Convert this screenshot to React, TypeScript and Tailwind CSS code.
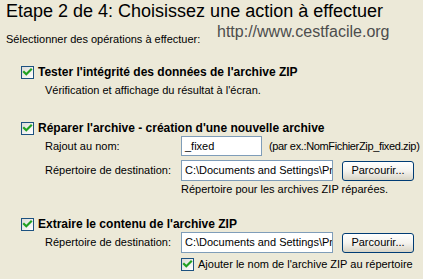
import React from "react";

function XpCheck() {
  return (
    <div className="w-[13px] h-[13px] shrink-0 border border-[#1c5180] bg-gradient-to-br from-[#dcdcd7] to-[#ffffff] flex items-center justify-center">
      <svg width="11" height="11" viewBox="0 0 11 11">
        <path d="M2 5 L4.3 7.3 L9 2.6" fill="none" stroke="#21a121" strokeWidth="2.2" strokeLinecap="square" />
      </svg>
    </div>
  );
}

function TextBox({ w, h, text }: { w: string; h: string; text: string }) {
  return (
    <div className={`${w} ${h} shrink-0 border border-[#7f9db9] bg-white pl-[3px] flex items-center overflow-hidden whitespace-nowrap text-[11px] leading-[13px]`}>
      {text}
    </div>
  );
}

function XpButton() {
  return (
    <div className="ml-[9px] w-[72px] h-[20px] shrink-0 rounded-[3px] border border-[#003c74] bg-gradient-to-b from-[#ffffff] via-[#f4f3ee] to-[#d8d4c6] flex items-center justify-center text-[11px] leading-[13px]">
      Parcourir...
    </div>
  );
}

export default function App() {
  return (
    <div
      className="w-[423px] h-[279px] bg-[#ece9d8] overflow-hidden text-black flex flex-col"
      style={{ fontFamily: '"Liberation Sans", Arial, sans-serif' }}
    >
      <div className="pl-[6px] pt-[2px] text-[18px] leading-[18px] whitespace-nowrap">
        Etape 2 de 4: Choisissez une action à effectuer
      </div>
      <div className="flex h-[26px]">
        <div className="pl-[6px] mt-[13px] w-[217px] text-[11px] leading-[13px] whitespace-nowrap">
          Sélectionner des opérations à effectuer:
        </div>
        <div className="mt-[4px] text-[16px] leading-[16px] text-[#4d4d4d] whitespace-nowrap">
          http://www.cestfacile.org
        </div>
      </div>

      {/* Section 1 */}
      <div className="mt-[19px] pl-[21px] flex items-start h-[14px]">
        <div className="mt-[1px]">
          <XpCheck />
        </div>
        <div className="ml-[4px] font-bold text-[12px] leading-[14px] whitespace-nowrap">
          Tester l'intégrité des données de l'archive ZIP
        </div>
      </div>
      <div className="mt-[5px] pl-[45px] text-[11px] leading-[13px] whitespace-nowrap">
        Vérification et affichage du résultat à l'écran.
      </div>

      {/* Section 2 */}
      <div className="mt-[24px] pl-[21px] flex items-start h-[14px]">
        <div className="mt-[1px]">
          <XpCheck />
        </div>
        <div className="ml-[4px] font-bold text-[12px] leading-[14px] whitespace-nowrap">
          Réparer l'archive - création d'une nouvelle archive
        </div>
      </div>
      <div className="mt-[1px] flex items-center h-[20px] text-[11px] leading-[13px]">
        <div className="pl-[45px] w-[181px] shrink-0 whitespace-nowrap">Rajout au nom:</div>
        <TextBox w="w-[81px]" h="h-[20px]" text="_fixed" />
        <div className="ml-[7px] whitespace-nowrap tracking-[-0.35px]">(par ex.:NomFichierZip_fixed.zip)</div>
      </div>
      <div className="mt-[4px] flex items-center h-[21px] text-[11px] leading-[13px]">
        <div className="pl-[45px] w-[181px] shrink-0 whitespace-nowrap">Répertoire de destination:</div>
        <TextBox w="w-[152px]" h="h-[21px]" text="C:\Documents and Settings\Pr" />
        <XpButton />
      </div>
      <div className="mt-[2px] pl-[181px] text-[11px] leading-[13px] whitespace-nowrap">
        Répertoire pour les archives ZIP réparées.
      </div>

      {/* Section 3 */}
      <div className="mt-[21px] pl-[21px] flex items-start h-[14px]">
        <div className="mt-[1px]">
          <XpCheck />
        </div>
        <div className="ml-[4px] font-bold text-[12px] leading-[14px] whitespace-nowrap">
          Extraire le contenu de l'archive ZIP
        </div>
      </div>
      <div className="mt-[1px] flex items-center h-[21px] text-[11px] leading-[13px]">
        <div className="pl-[45px] w-[181px] shrink-0 whitespace-nowrap">Répertoire de destination:</div>
        <TextBox w="w-[152px]" h="h-[21px]" text="C:\Documents and Settings\Pr" />
        <XpButton />
      </div>
      <div className="mt-[5px] pl-[181px] flex items-center h-[13px]">
        <XpCheck />
        <div className="ml-[4px] text-[11px] leading-[13px] whitespace-nowrap">
          Ajouter le nom de l'archive ZIP au répertoire
        </div>
      </div>
    </div>
  );
}
